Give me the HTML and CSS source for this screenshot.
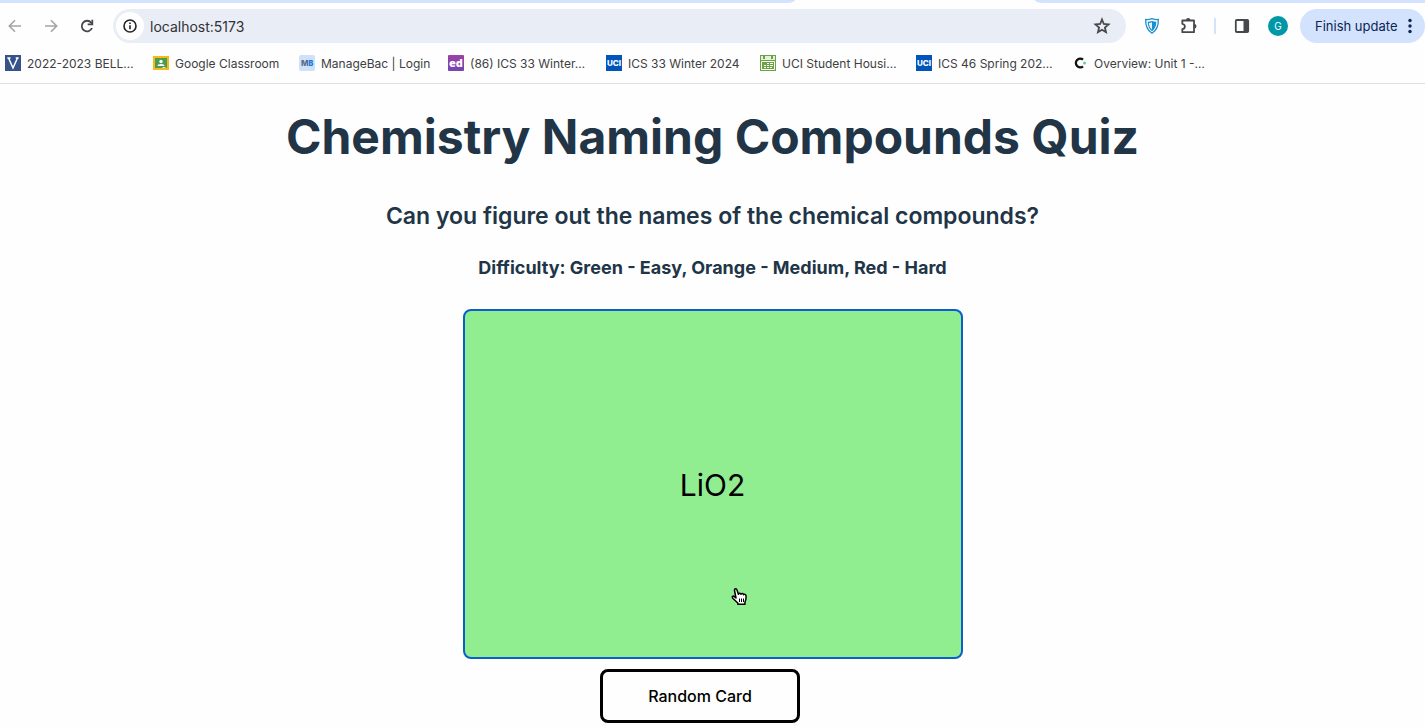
FILE: index.html
```html
<!DOCTYPE html>
<html lang="en">
<head>
<meta charset="utf-8">
<title>Chemistry Naming Compounds Quiz</title>
<link rel="stylesheet" href="styles.css">
</head>
<body>
<header class="browser">
  <div class="tabstrip"><div class="tabs-left"></div><div class="tabs-active"></div><div class="tabs-right"></div></div>
  <div class="toolbar">
    <nav class="history">
      <button class="icon-btn muted" aria-label="Back"><svg width="16" height="16" viewBox="0 0 16 16"><path d="M14 8H2.500M8 2.300L2.300 8 8 13.700"/></svg></button>
      <button class="icon-btn muted" aria-label="Forward"><svg width="16" height="16" viewBox="0 0 16 16"><path d="M2 8h11.500M8 2.300L13.700 8 8 13.700"/></svg></button>
      <button class="icon-btn dark" aria-label="Reload"><svg width="16" height="16" viewBox="0 0 16 16"><path d="M13 10A5.300 5.300 0 1 1 12.200 4.700L13 5.500"/><path d="M13.300 1.800V6.400H8.700"/></svg></button>
    </nav>
    <div class="omnibox">
      <button class="site-info" aria-label="Site information"><svg width="16" height="16" viewBox="0 0 16 16"><circle cx="8" cy="8" r="6"/><path d="M8 7.300v4M8 4.500v1.600"/></svg></button>
      <input class="address" type="text" aria-label="Address" value="localhost:5173">
      <button class="icon-btn dark" aria-label="Bookmark this page"><svg width="18" height="18" viewBox="0 0 18 18"><path d="M9 2.500l1.800 4.500 4.700.4-3.600 3.100 1.100 4.700L9 12.700l-4 2.500 1.100-4.700-3.600-3.100L7.200 7z"/></svg></button>
    </div>
    <div class="extensions">
      <button class="icon-btn" aria-label="VPN extension"><svg class="shield" width="16" height="18" viewBox="0 0 16 18"><path class="shield-line" d="M8 1.600Q11 2.700 14.300 2.500C14.600 9 12.500 13.500 8 16.300 3.500 13.500 1.400 9 1.700 2.500Q5 2.700 8 1.600z"/><path class="shield-fill" d="M8 4Q10.200 4.700 12.300 4.700C12.300 9 10.900 12 8 14.300 5.100 12 3.700 9 3.700 4.700Q5.800 4.700 8 4z"/><path class="shield-gap" d="M8 5.300V12.500C6 10.800 5 8.600 4.900 5.900Q6.500 5.800 8 5.300z"/></svg></button>
      <button class="icon-btn dark" aria-label="Extensions"><svg width="18" height="18" viewBox="0 0 18 18"><path stroke-linejoin="round" d="M2.300 3.500H14v11.700H2.300v-3C5.700 11.700 5.700 7.300 2.300 6.800z"/><path class="solid" d="M6 3.200a2.200 2.200 0 0 1 4.400 0zM14.300 7.100a2.200 2.200 0 0 1 0 4.400z"/></svg></button>
      <span class="separator"></span>
      <button class="icon-btn dark" aria-label="Side panel"><svg width="16" height="16" viewBox="0 0 16 16"><rect x="1.800" y="2" width="12.400" height="12" rx="1"/><path class="solid" d="M9.500 2h5v12h-5z"/></svg></button>
      <button class="avatar" aria-label="Profile">G</button>
      <button class="update">Finish update <svg width="4" height="16" viewBox="0 0 4 16"><circle cx="2" cy="2.500" r="1.700"/><circle cx="2" cy="8" r="1.700"/><circle cx="2" cy="13.500" r="1.700"/></svg></button>
    </div>
  </div>
  <nav class="bookmarks">
    <a class="bookmark" href="#"><svg width="16" height="16" viewBox="0 0 16 16"><path fill="#35528b" d="M0 0h16v16H0z"/><path fill="none" stroke="#fff" stroke-width="1.500" d="M3.500 3L8 13l4.500-10M2.300 3h3.200M10.700 3h3"/></svg>2022-2023 BELL…</a>
    <a class="bookmark" href="#"><svg width="16" height="16" viewBox="0 0 16 16"><path fill="#f5ba16" d="M0 1h16v14H0z"/><path fill="#4a9c54" d="M2 3h12v10H2z"/><circle cx="8" cy="6.500" r="1.700" fill="#fff"/><path fill="#fff" d="M4.500 11q0-2 3.500-2t3.500 2z"/><path fill="#d8e9d8" d="M9.500 12h3v1h-3z"/></svg>Google Classroom</a>
    <a class="bookmark" href="#"><span class="favicon managebac">M<b>B</b></span>ManageBac | Login</a>
    <a class="bookmark" href="#"><span class="favicon ed">ed</span>(86) ICS 33 Winter…</a>
    <a class="bookmark" href="#"><span class="favicon uci">UCI</span>ICS 33 Winter 2024</a>
    <a class="bookmark" href="#"><svg width="16" height="16" viewBox="0 0 16 16"><path fill="#6aa442" d="M0 0h16v16H0z"/><path fill="#e4f0dc" d="M1 1h2v3h2V1h6v3h2V1h2v4H1z"/><path fill="none" stroke="#fff" d="M1.500 6.500h13v8h-13z"/><path fill="#fff" d="M10 8h3v1h-3zM7 8h2v1H7zM4 10h2v1H4zM7 10h2v1H7zM10 10h3v1h-3zM4 12h2v1H4zM7 12h2v1H7zM10 12h2v1h-2z"/></svg>UCI Student Housi…</a>
    <a class="bookmark" href="#"><span class="favicon uci">UCI</span>ICS 46 Spring 202…</a>
    <a class="bookmark" href="#"><svg width="16" height="16" viewBox="0 0 16 16"><path fill="none" stroke="#111" stroke-width="2.400" d="M11 4.700A4.300 4.300 0 1 0 11 11.300"/><circle cx="12.500" cy="8" r="1.500" fill="#63d393"/></svg>Overview: Unit 1 -…</a>
  </nav>
</header>
<main class="quiz">
  <h1 class="title">Chemistry Naming Compounds Quiz</h1>
  <h2 class="subtitle">Can you figure out the names of the chemical compounds?</h2>
  <h3 class="difficulty">Difficulty: Green - Easy, Orange - Medium, Red - Hard</h3>
  <div class="card-area">
    <button class="card">LiO2</button>
    <svg class="pointer" width="18" height="20" viewBox="0 0 18 20"><path fill="#fff" stroke="#000" stroke-width="1.500" stroke-linejoin="round" d="M5 11L3.500 3.500C3.200 1.300 5.400 1 6 3l1.400 4.200c.5-1.400 2.200-1.100 2.600 0 .6-1.100 2.200-.8 2.500.5.800-1 2.400-.3 2.500 1 .2 3.300.3 4.500-1 6v2.500H6.800V16L2 11.500C.5 9.500 2 8.500 3.400 9.600z"/><path stroke="#000" d="M8.500 11.500V15M10.500 11.500V15M12.500 11.500V15"/></svg>
  </div>
  <button class="random">Random Card</button>
</main>
</body>
</html>
```
FILE: styles.css
```css
* { box-sizing: border-box; }
body {
  margin: 0;
  background: #fefefe;
  color: #213547;
  font-family: Inter, "Liberation Sans", sans-serif;
}
button, input { font: inherit; color: inherit; }
button { padding: 0; border: 0; background: none; cursor: pointer; }
svg { display: block; flex: none; }
.browser { border-bottom: 1px solid #dedfe1; }
.tabstrip { display: grid; grid-template-columns: 795fr 240fr 390fr; height: 3px; }
.tabs-left { background: #d3e3fd; border-bottom-right-radius: 8px 3px; }
.tabs-right { background: #d3e3fd; border-bottom-left-radius: 8px 3px; }
.toolbar { display: flex; align-items: center; padding-top: 6px; height: 40px; }
.history { display: flex; gap: 20px; width: 113px; padding-left: 7px; }
.icon-btn { fill: none; stroke-width: 1.600; }
.muted { stroke: #a3a4a6; }
.dark { stroke: #46484b; stroke-width: 1.800; }
.dark .solid { fill: #46484b; stroke: none; }
.omnibox {
  flex: 1;
  display: flex;
  align-items: center;
  height: 34px;
  padding: 0 15px 0 3px;
  border-radius: 17px;
  background: #e9edf6;
}
.site-info {
  display: grid;
  place-items: center;
  width: 28px;
  height: 28px;
  border-radius: 50%;
  background: #fefefe;
  fill: none;
  stroke: #222326;
  stroke-width: 1.600;
}
.address {
  flex: 1;
  min-width: 0;
  padding: 0 6px;
  border: 0;
  outline: 0;
  background: none;
  color: #303236;
  font-size: 14px;
}
.extensions { display: flex; align-items: center; padding-left: 18px; }
.separator { width: 2px; height: 16px; margin: 0 18px 0 16px; background: #d3e3fd; }
.shield { margin-right: 20px; }
.shield-line { stroke: #1c8fd0; stroke-width: 1.300; }
.shield-fill { fill: #1c8fd0; }
.shield-gap { fill: #e4f3fb; }
.avatar {
  width: 20px;
  height: 20px;
  margin: 0 12px 0 18px;
  border-radius: 50%;
  background: #0097a7;
  color: #fff;
  font-size: 10px;
}
.update {
  display: flex;
  align-items: center;
  justify-content: space-between;
  width: 125px;
  height: 34px;
  padding: 0 13px 0 15px;
  border-radius: 17px;
  background: #d3e3fd;
  color: #0b2555;
  fill: #0b2555;
  font-size: 13px;
}
.bookmarks {
  display: grid;
  grid-template-columns: 148fr 146fr 149fr 158fr 154fr 156fr 156fr 353fr;
  height: 40px;
  padding-left: 5px;
}
.bookmark {
  display: flex;
  align-items: center;
  gap: 6px;
  color: #3d3f42;
  font-size: 12px;
  text-decoration: none;
  white-space: nowrap;
}
.favicon {
  display: grid;
  place-items: center;
  flex: none;
  width: 16px;
  height: 16px;
  color: #fff;
  font-size: 8px;
  font-weight: 800;
}
.managebac { display: flex; justify-content: center; border-radius: 2px; background: #cfe0fa; color: #596d89; }
.managebac b { color: #1778da; font-size: 7px; }
.ed { border-radius: 1px; background: linear-gradient(#9b42a5, #7445b2); font-family: "Open Sans", sans-serif; font-size: 11px; line-height: 12px; }
.uci { background: #0055bd; }
.quiz { display: flex; flex-direction: column; align-items: center; padding: 25px 16px 0; text-align: center; }
.title { margin: 0; font-size: 48px; font-weight: 700; line-height: 56px; }
.subtitle { margin: 33px 0 0; font-size: 23px; font-weight: 600; line-height: 36px; }
.difficulty { margin: 20px 0 27px; font-size: 18px; line-height: 28px; }
.card-area { position: relative; width: 500px; max-width: 100%; }
.card {
  width: 100%;
  height: 350px;
  padding-top: 2px;
  border: 2px solid #0860cf;
  border-radius: 8px;
  background: #90ee90;
  color: #000;
  font-size: 30px;
}
.pointer { position: absolute; left: 268px; top: 278px; }
.random {
  width: 200px;
  height: 54px;
  margin: 10px 25px 5px 0;
  border: 3px solid #000;
  border-radius: 8px;
  background: #fefefe;
  color: #000;
  font-size: 16px;
  font-weight: 500;
}
```
